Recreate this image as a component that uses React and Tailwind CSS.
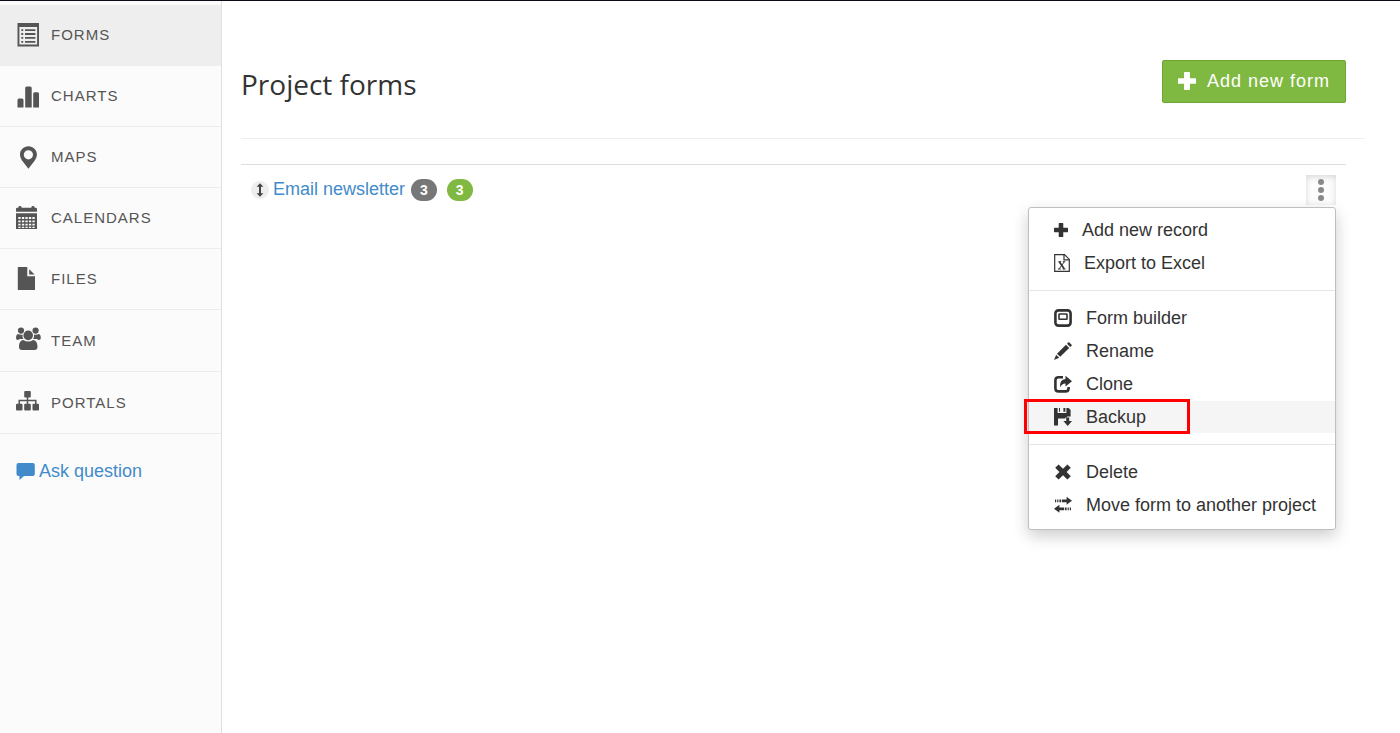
import React, { useState } from 'react';

const NavIcon = ({ children }) => (
    <svg className="w-[26px] h-7 shrink-0" viewBox="0 -2 26 28" fill="currentColor" aria-hidden="true">
        {children}
    </svg>
);

const FormsIcon = () => (
    <NavIcon>
        <path fillRule="evenodd" d="M1.5 0H23V23.5H1.5ZM3.4 4V21.6H21.1V4Z" />
        <path d="M5.3 6.2H7.2V8H5.3ZM5.3 10.1H7.2V11.9H5.3ZM5.3 14H7.2V15.8H5.3ZM5.3 17.9H7.2V19.7H5.3Z" />
        <path d="M9 6.2H19.4V8H9ZM9 10.1H19.4V11.9H9ZM9 14H19.4V15.8H9ZM9 17.9H19.4V19.7H9Z" />
    </NavIcon>
);

const ChartsIcon = () => (
    <NavIcon>
        <path d="M1.5 23.5V16Q1.5 14.5 3 14.5H6Q7.5 14.5 7.5 16V23.5Z" />
        <path d="M9.2 23.5V4Q9.2 2.5 10.7 2.5H14.2Q15.7 2.5 15.7 4V23.5Z" />
        <path d="M17.2 23.5V9.7Q17.2 8.2 18.7 8.2H21.5Q23 8.2 23 9.7V23.5Z" />
    </NavIcon>
);

const MapsIcon = () => (
    <NavIcon>
        <path fillRule="evenodd" d="M12.4 1.3C7.6 1.3 4 5 4 9.6C4 12 5 14 6.2 15.8L12.4 23.7L18.6 15.8C19.9 14 20.9 12 20.9 9.6C20.9 5 17.2 1.3 12.4 1.3ZM12.4 5.2A4.6 4.6 0 1 1 12.4 14.4A4.6 4.6 0 1 1 12.4 5.2Z" />
    </NavIcon>
);

const CalendarsIcon = () => (
    <NavIcon>
        <path d="M0 5.8V3Q0 1.8 1.2 1.8H2.4V1.2Q2.4 0 4 0T5.6 1.2V1.8H15.4V1.2Q15.4 0 17 0T18.6 1.2V1.8H19.8Q21 1.8 21 3V5.8Z" />
        <path fillRule="evenodd" d="M0 7.2H21V23H0ZM2.3 11V13H4.6V11ZM5.9 11V13H8.2V11ZM9.4 11V13H11.7V11ZM12.9 11V13H15.2V11ZM16.4 11V13H18.7V11ZM2.3 14.4V16.2H4.6V14.4ZM5.9 14.4V16.2H8.2V14.4ZM9.4 14.4V16.2H11.7V14.4ZM12.9 14.4V16.2H15.2V14.4ZM16.4 14.4V16.2H18.7V14.4ZM2.3 17.8V19.6H4.6V17.8ZM5.9 17.8V19.6H8.2V17.8ZM9.4 17.8V19.6H11.7V17.8ZM12.9 17.8V19.6H15.2V17.8ZM16.4 17.8V19.6H18.7V17.8ZM5.9 20.7V22H8.2V20.7ZM9.4 20.7V22H11.7V20.7ZM12.9 20.7V22H15.2V20.7ZM2.3 20.7V22H4.6V20.7ZM16.4 20.7V22H18.7V20.7Z" />
    </NavIcon>
);

const FilesIcon = () => (
    <NavIcon>
        <path d="M1.8 0H11.3V9.3H19V23H1.8Z" />
        <path d="M13.2 2.2L18.6 7.6H13.2Z" />
    </NavIcon>
);

const TeamIcon = () => (
    <NavIcon>
        <circle cx="12.2" cy="6.4" r="4.8" />
        <path d="M7.5 11Q9.5 12.6 12.2 12.6T17 11C20 11.2 21.5 14 21.5 18Q21.5 21 18.5 21H6Q3 21 3 18C3 14 4.5 11.2 7.5 11Z" />
        <circle cx="5" cy="1.6" r="3.1" />
        <circle cx="19.6" cy="1.6" r="3.1" />
        <path d="M2 5Q4.5 6.2 6.6 5.4Q6 8.4 7.4 10H3.6Q2.6 11 1.8 11Q0 11 0 9Q0 5.5 2 5Z" />
        <path d="M22.8 5Q20.2 6.2 18 5.4Q18.6 8.4 17 10H21Q22 11 23 11Q24.8 11 24.8 9Q24.8 5.5 22.8 5Z" />
    </NavIcon>
);

const PortalsIcon = () => (
    <NavIcon>
        <rect x="8.2" y="0" width="6.6" height="6.4" rx="1" />
        <path fill="none" stroke="currentColor" strokeWidth="1.5" d="M11.5 6V13M3.2 13V9.5H19.8V13" />
        <rect x="0" y="12.8" width="6.5" height="6.8" rx="1" />
        <rect x="8.2" y="12.8" width="6.6" height="6.8" rx="1" />
        <rect x="16.5" y="12.8" width="6.5" height="6.8" rx="1" />
    </NavIcon>
);

const PlusIcon = ({ className }) => (
    <svg className={className} viewBox="0.4 0.4 17.2 17.2" fill="currentColor" aria-hidden="true">
        <path d="M6.8 0.5H11.2Q11.8 0.5 11.8 1.1V6.3H17Q17.6 6.3 17.6 6.9V11.1Q17.6 11.7 17 11.7H11.8V16.9Q11.8 17.5 11.2 17.5H6.8Q6.2 17.5 6.2 16.9V11.7H1Q0.4 11.7 0.4 11.1V6.9Q0.4 6.3 1 6.3H6.2V1.1Q6.2 0.5 6.8 0.5Z" />
    </svg>
);

const ExcelIcon = () => (
    <svg className="w-4 h-[18px] shrink-0" viewBox="0 0 16 18" fill="none" stroke="currentColor" aria-hidden="true">
        <path strokeWidth="1.2" d="M0.7 0.6H10.5L15.3 5.4V17.4H0.7Z" />
        <path strokeWidth="1.2" d="M10 0.6V5.8H15.3" />
        <path strokeWidth="1.7" d="M5.4 8L10.2 14.8" />
        <path strokeWidth="1" d="M10.2 8L5.2 14.8M4.3 7.7H7.2M8.8 7.7H11.3M4 15H6.8M8.6 15H11.6" />
    </svg>
);

const MenuIcon = ({ children }) => (
    <svg className="w-[18px] h-[18px] shrink-0" viewBox="0 0 18 18" fill="currentColor" aria-hidden="true">
        {children}
    </svg>
);

const BuilderIcon = () => (
    <MenuIcon>
        <rect x="1.4" y="1.4" width="15.2" height="15.2" rx="3" fill="none" stroke="currentColor" strokeWidth="2.6" />
        <rect x="5" y="5" width="8" height="5.2" rx="0.5" fill="none" stroke="currentColor" strokeWidth="1.6" />
    </MenuIcon>
);

const RenameIcon = () => (
    <MenuIcon>
        <path d="M12 2.8L15.2 6L6.2 14.8L3 11.8Z" />
        <path d="M13 1.8L14.3 0.4Q14.8 0 15.3 0.4L17.6 2.7Q18 3.2 17.6 3.7L16.2 5Z" />
        <path d="M2.2 12.8L5.2 15.8L0 18Z" />
    </MenuIcon>
);

const CloneIcon = () => (
    <MenuIcon>
        <path fill="none" stroke="currentColor" strokeWidth="2.6" d="M9 2.2H4.6Q1.4 2.2 1.4 5.4V13.2Q1.4 16.4 4.6 16.4H11.4Q14.6 16.4 14.6 13.2V12" />
        <path d="M11.5 0.8L18 6.2L11.5 11.6V8.4Q7.8 8.4 6.2 12.2Q5.4 4.4 11.5 4Z" />
    </MenuIcon>
);

const BackupIcon = () => (
    <MenuIcon>
        <path d="M0 0H3.6V6H12.4V0H14.6L16.6 2V8.4H11.2V10.6H4V17.4H0Z" />
        <path d="M3 5H13V9.6H3Z" />
        <path d="M9.4 0H11.4V3.8H9.4ZM5 0H6V3.8H5Z" />
        <path d="M12.2 9.4H15.2V13H18L13.7 18L9.4 13H12.2Z" />
    </MenuIcon>
);

const DeleteIcon = () => (
    <MenuIcon>
        <path d="M4.6 1.4L9 5.7L13.4 1.4L16.8 4.8L12.6 9L16.8 13.2L13.4 16.6L9 12.3L4.6 16.6L1.2 13.2L5.4 9L1.2 4.8Z" />
    </MenuIcon>
);

const MoveIcon = () => (
    <MenuIcon>
        <path d="M8 3.4H12.6V0.8L18 4.8L12.6 8.8V6.2H8Z" />
        <path d="M1 3.4H2.2V6.2H1ZM3.2 3.4H4.4V6.2H3.2ZM5.4 3.4H7.2V6.2H5.4Z" />
        <path d="M10 11.4H5.4V8.8L0 12.8L5.4 16.8V14.2H10Z" />
        <path d="M10.8 11.4H12.6V14.2H10.8ZM13.6 11.4H14.8V14.2H13.6ZM15.8 11.4H17V14.2H15.8Z" />
    </MenuIcon>
);

const navItems = [
    { name: 'Forms', icon: <FormsIcon />, className: 'h-[61px] bg-[#eeeeee] border-[#eeeeee]' },
    { name: 'Charts', icon: <ChartsIcon />, className: 'h-[61px] border-[#ececec]' },
    { name: 'Maps', icon: <MapsIcon />, className: 'h-[61px] border-[#ececec]' },
    { name: 'Calendars', icon: <CalendarsIcon />, className: 'h-[61px] border-[#ececec]' },
    { name: 'Files', icon: <FilesIcon />, className: 'h-[61px] border-[#ececec]' },
    { name: 'Team', icon: <TeamIcon />, className: 'h-[62px] border-[#ececec]' },
    { name: 'Portals', icon: <PortalsIcon />, className: 'h-[62px] border-[#ececec]' },
];

const menuGroups = [
    [
        { name: 'Add new record', icon: <PlusIcon className="w-[14px] h-[14px] shrink-0" /> },
        { name: 'Export to Excel', icon: <ExcelIcon /> },
    ],
    [
        { name: 'Form builder', icon: <BuilderIcon /> },
        { name: 'Rename', icon: <RenameIcon /> },
        { name: 'Clone', icon: <CloneIcon /> },
        { name: 'Backup', icon: <BackupIcon />, active: true },
    ],
    [
        { name: 'Delete', icon: <DeleteIcon /> },
        { name: 'Move form to another project', icon: <MoveIcon /> },
    ],
];

const Sidebar = () => (
    <aside className="w-[222px] shrink-0 bg-[#fbfbfb] border-r border-[#e0e0e0]">
        <nav className="pt-1">
            {navItems.map((item) => (
                <a
                    key={item.name}
                    href="#"
                    className={`flex items-center gap-[9px] pl-4 border-b text-[15px] uppercase tracking-[1px] text-[#555555] ${item.className}`}
                >
                    {item.icon}
                    <span>{item.name}</span>
                </a>
            ))}
        </nav>
        <a href="#" className="flex items-center gap-1 mt-[25px] pl-4 text-[#428bca]">
            <svg className="w-[19px] h-[17px]" viewBox="0 0 19 17" fill="currentColor" aria-hidden="true">
                <path d="M2.5 0H16.8Q18.8 0 18.8 2V11Q18.8 13 16.8 13H8L3.5 17V13H2.5Q0.5 13 0.5 11V2Q0.5 0 2.5 0Z" />
            </svg>
            <span>Ask question</span>
        </a>
    </aside>
);

const FormMenu = () => (
    <div className="absolute right-0 top-8 z-10 w-[308px] pt-[6px] pb-2 bg-white border border-[#bfbfbf] rounded-[3px] shadow-[0_6px_16px_rgba(0,0,0,0.2)]">
        {menuGroups.map((group, index) => (
            <ul
                key={index}
                className={index > 0 ? 'flex flex-col gap-px mt-[11px] pt-[11px] border-t border-[#e5e5e5]' : 'flex flex-col gap-px'}
            >
                {group.map((item) => (
                    <li key={item.name} className="relative">
                        <button
                            type="button"
                            className={`flex items-center gap-[14px] w-full h-8 pl-[25px] text-left whitespace-nowrap text-[#333333] ${item.active ? 'bg-[#f5f5f5]' : ''}`}
                        >
                            {item.icon}
                            <span>{item.name}</span>
                        </button>
                        {item.active && (
                            <span className="absolute -left-[5px] -top-[2px] w-[166px] h-[35px] border-3 border-[#ff0000] pointer-events-none" />
                        )}
                    </li>
                ))}
            </ul>
        ))}
    </div>
);

const App = () => {
    const [menuOpen, setMenuOpen] = useState(true);

    return (
        <div className="min-h-screen flex flex-col bg-white border-t border-[#0b0b18] font-['Liberation_Sans',Arial,sans-serif] text-[18px] leading-6 text-[#333333]">
            <div className="flex flex-1">
                <Sidebar />
                <main className="flex-1 pl-[19px] pr-[35px] pt-[59px]">
                    <header className="flex items-start justify-between pr-[19px] pb-[34px] border-b border-[#eeeeee]">
                        <h1 className="pt-1 text-[28px] leading-10 font-['Open_Sans','Noto_Sans',sans-serif]">Project forms</h1>
                        <button
                            type="button"
                            className="flex items-center gap-[11px] h-[43px] px-[15px] pb-[2px] bg-[#7fb942] border border-[#6fa436] rounded-[2px] text-white tracking-[1px]"
                        >
                            <PlusIcon className="w-[18px] h-[18px]" />
                            <span>Add new form</span>
                        </button>
                    </header>

                    <ul className="mt-[25px] mr-[19px] border-t border-[#dddddd]">
                        <li className="flex items-center pl-[10px] pr-[10px] pt-[10px]">
                            <svg className="w-[18px] h-[18px]" viewBox="0 0 18 18" aria-hidden="true">
                                <circle cx="9" cy="9" r="9" fill="#eeeeee" />
                                <path fill="#444444" d="M9 2.2L12.4 5.8H10V12.2H12.4L9 15.8L5.6 12.2H8V5.8H5.6Z" />
                            </svg>
                            <a href="#" className="ml-1 pb-[2px] text-[#428bca]">Email newsletter</a>
                            <span className="ml-[6px] px-[9px] rounded-full bg-[#777777] text-[14px] leading-[22px] font-bold text-white">3</span>
                            <span className="ml-[10px] px-[9px] rounded-full bg-[#7fb942] text-[14px] leading-[22px] font-bold text-white">3</span>
                            <div className="relative ml-auto">
                                <button
                                    type="button"
                                    aria-label="Form actions"
                                    onClick={() => setMenuOpen(!menuOpen)}
                                    className="block w-[30px] h-[30px] bg-[#fdfdfd] shadow-[inset_0_2px_6px_rgba(0,0,0,0.15)]"
                                >
                                    <svg className="w-[30px] h-[30px]" viewBox="0 0 30 30" fill="#8a8a8a" aria-hidden="true">
                                        <circle cx="15" cy="7" r="3" />
                                        <circle cx="15" cy="15" r="3" />
                                        <circle cx="15" cy="23" r="3" />
                                    </svg>
                                </button>
                                {menuOpen && <FormMenu />}
                            </div>
                        </li>
                    </ul>
                </main>
            </div>
        </div>
    );
};

export default App;
